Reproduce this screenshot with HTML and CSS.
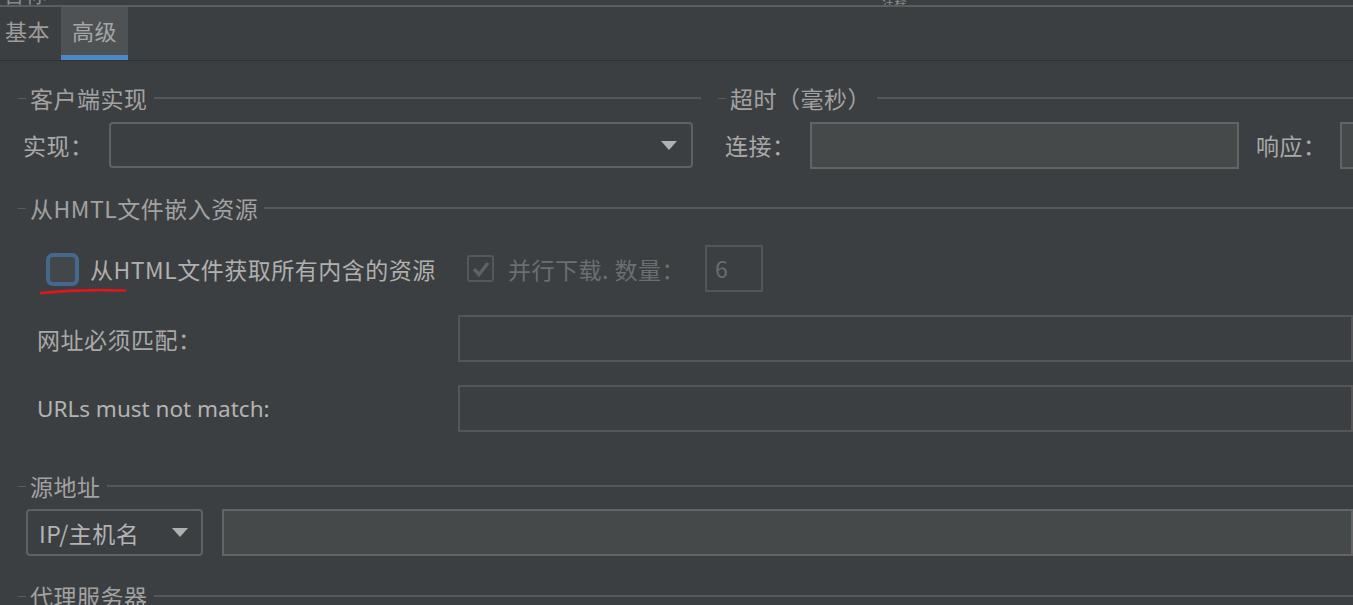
FILE: index.html
```html
<!DOCTYPE html>
<html lang="zh">
<head>
<meta charset="utf-8">
<title>高级</title>
<link rel="stylesheet" href="styles.css">
</head>
<body>
<div class="page">
  <div class="topstrip"><span class="cut cut-a">名称</span><span class="cut cut-b">注释</span></div>
  <div class="tabbar">
    <div class="tab">基本</div>
    <div class="tab active">高级</div>
  </div>
  <div class="content">
    <div class="row-sections">
      <div class="fieldset left">
        <div class="legend"><span class="dash"></span><span class="ltext">客户端实现</span><span class="lline"></span></div>
        <div class="fields">
          <span class="label impl-label">实现：</span>
          <div class="combo wide"><span class="arrow"></span></div>
        </div>
      </div>
      <div class="fieldset right">
        <div class="legend"><span class="dash"></span><span class="ltext">超时（毫秒）</span><span class="lline"></span></div>
        <div class="fields">
          <span class="label conn-label">连接：</span>
          <div class="input conn"></div>
          <span class="label resp-label">响应：</span>
          <div class="input resp"></div>
        </div>
      </div>
    </div>

    <div class="legend sec2"><span class="dash"></span><span class="ltext">从HMTL文件嵌入资源</span><span class="lline"></span></div>
    <div class="cb-row">
      <div class="checkbox focus"></div>
      <span class="label cb-label">从HTML文件获取所有内含的资源</span>
      <div class="checkbox disabled">
        <svg width="20" height="20" viewBox="0 0 20 20"><path d="M3 10 L8 15.5 L17 4" fill="none" stroke="#5f6263" stroke-width="3.4"/></svg>
      </div>
      <span class="label dis-label">并行下载. 数量：</span>
      <div class="input count">6</div>
      <svg class="redline" width="90" height="8" viewBox="0 0 90 8"><path d="M2 5 Q40 1 86 2.5" fill="none" stroke="#e0161b" stroke-width="2.6" stroke-linecap="round"/></svg>
    </div>
    <div class="frow r1">
      <span class="label flabel">网址必须匹配：</span>
      <div class="input grow plain"></div>
    </div>
    <div class="frow r2">
      <span class="label flabel latin">URLs must not match:</span>
      <div class="input grow plain"></div>
    </div>

    <div class="legend sec3"><span class="dash"></span><span class="ltext">源地址</span><span class="lline"></span></div>
    <div class="src-row">
      <div class="combo small"><span class="ctext">IP/主机名</span><span class="arrow"></span></div>
      <div class="input grow src"></div>
    </div>

    <div class="legend sec4"><span class="dash"></span><span class="ltext">代理服务器</span><span class="lline"></span></div>
  </div>
</div>
</body>
</html>
```

FILE: styles.css
```css
html, body {
  margin: 0;
  padding: 0;
  background: #3c3f41;
  overflow: hidden;
}
body {
  width: 1353px;
  height: 605px;
  font-family: "Noto Sans CJK SC", "Noto Sans", sans-serif;
  font-size: 23px;
  letter-spacing: 0.5px;
  color: #b3b3b3;
}
.page {
  width: 1353px;
  height: 605px;
  overflow: hidden;
}
.topstrip {
  height: 5px;
  border-bottom: 2px solid #5b5d5f;
  position: relative;
  overflow: hidden;
}
.cut {
  position: absolute;
  top: -19px;
  font-size: 22px;
  line-height: 22px;
  color: #8a8a8a;
}
.cut-a { left: 2px; }
.cut-b { left: 882px; font-size: 12px; top: -9px; }

.tabbar {
  display: flex;
  height: 53px;
  border-bottom: 1px solid #2f3133;
}
.tab {
  height: 48px;
  line-height: 46px;
  padding: 0 9px 0 5px;
  font-size: 22px;
  color: #9c9c9c;
  border-bottom: 5px solid transparent;
}
.tab.active {
  margin-left: 2px;
  padding: 0 11px;
  background: #4e5254;
  border-bottom-color: #4a88c7;
  color: #a6a6a6;
}

.content {
  padding-left: 18px;
}
.legend {
  display: flex;
  align-items: center;
  height: 24px;
  line-height: 24px;
  color: #a2a2a2;
}
.dash {
  width: 8px;
  height: 1px;
  background: #5c5c5c;
  margin-right: 4px;
  flex: none;
}
.ltext {
  white-space: nowrap;
}
.lline {
  flex: 1;
  height: 2px;
  background: #555759;
  margin-left: 6px;
}

.row-sections {
  display: flex;
  gap: 17px;
  margin-top: 25px;
}
.fieldset.left { width: 683px; flex: none; }
.fieldset.right { flex: 1; min-width: 0; }
.fields {
  display: flex;
  align-items: center;
  margin-top: 12px;
  height: 46px;
}
.label {
  white-space: nowrap;
  color: #a9a9a9;
  flex: none;
}
.impl-label { margin-left: 5px; width: 86px; }
.conn-label { margin-left: 7px; width: 85px; }
.resp-label { margin-left: 17px; width: 84px; }

.combo {
  box-sizing: border-box;
  height: 46px;
  border: 2px solid #5f6163;
  border-radius: 4px;
  display: flex;
  align-items: center;
  justify-content: flex-end;
  position: relative;
}
.combo.wide { width: 584px; padding-right: 14px; flex: none; }
.arrow {
  width: 0;
  height: 0;
  border-left: 8px solid transparent;
  border-right: 8px solid transparent;
  border-top: 9px solid #b1b1b1;
}
.input {
  box-sizing: border-box;
  height: 47px;
  background: #45494a;
  border: 2px solid #646464;
}
.input.conn { width: 429px; flex: none; }
.input.resp { width: 200px; flex: none; }

.sec2 { margin-top: 28px; }
.cb-row {
  position: relative;
  display: flex;
  align-items: center;
  height: 47px;
  margin-top: 25px;
}
.checkbox {
  box-sizing: border-box;
  flex: none;
}
.checkbox.focus {
  width: 33px;
  height: 33px;
  margin-left: 28px;
  border: 4px solid #44698f;
  border-radius: 7px;
  background: #43474a;
  margin-top: 2px;
}
.cb-label {
  margin-left: 11px;
  color: #b0b0b0;
  width: 377px;
}
.checkbox.disabled {
  width: 27px;
  height: 27px;
  border: 2px solid #555759;
  border-radius: 3px;
  display: flex;
  align-items: center;
  justify-content: center;
}
.dis-label {
  margin-left: 14px;
  width: 197px;
  color: #6c6e70;
}
.input.count {
  width: 58px;
  background: transparent;
  border-color: #535557;
  color: #6a6c6e;
  padding-left: 8px;
  line-height: 43px;
  flex: none;
}
.redline {
  position: absolute;
  left: 21px;
  top: 43px;
}

.frow {
  display: flex;
  align-items: center;
  height: 47px;
}
.r1 { margin-top: 23px; }
.r2 { margin-top: 23px; }
.flabel {
  margin-left: 19px;
  width: 421px;
}
.latin {
  font-family: "Noto Sans", "Noto Sans CJK SC", sans-serif;
  font-size: 22.5px;
  letter-spacing: 0;
  color: #b3b3b3;
}
.input.grow { flex: 1; }
.input.plain {
  background: transparent;
  border-color: #535557;
}

.sec3 { margin-top: 42px; }
.src-row {
  display: flex;
  align-items: center;
  margin-top: 11px;
  height: 47px;
}
.combo.small {
  width: 177px;
  margin-left: 8px;
  padding: 0 13px 0 11px;
  justify-content: space-between;
  height: 47px;
  color: #b3b3b3;
  flex: none;
}
.src {
  margin-left: 19px;
}
.sec4 { margin-top: 28px; }
```
